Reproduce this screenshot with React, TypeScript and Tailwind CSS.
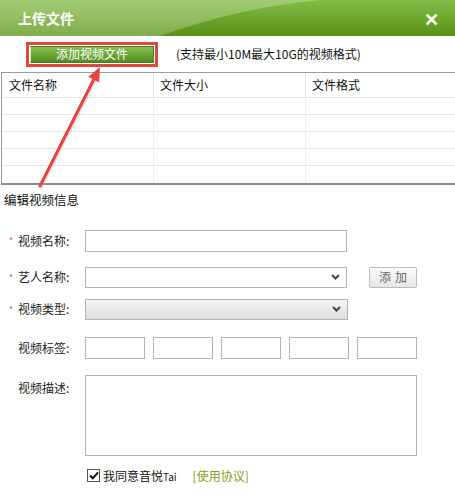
import React from "react";

const font = { fontFamily: '"Noto Sans CJK SC", "Liberation Sans", sans-serif' };

function Chevron() {
  return (
    <svg width="9" height="7" viewBox="0 0 9 7" className="absolute right-[6px] top-1/2 -translate-y-1/2">
      <path d="M1 1.5 L4.5 5 L8 1.5" stroke="#444" strokeWidth="2" fill="none" />
    </svg>
  );
}

function Label({ text, required }: { text: string; required?: boolean }) {
  return (
    <div className="w-[85px] shrink-0 flex items-center pl-[9px] text-[12px] text-[#222]">
      <span className={`w-[9px] text-[9px] leading-none ${required ? "text-[#e0603c]" : "text-transparent"}`}>*</span>
      <span>{text}</span>
    </div>
  );
}

export default function App() {
  const rows = [0, 1, 2, 3, 4];
  return (
    <div className="relative w-[455px] h-[499px] bg-white overflow-hidden" style={font}>
      {/* Title bar */}
      <div className="relative h-[36px] bg-gradient-to-b from-[#a3cd74] to-[#82ad4c] flex items-center justify-between px-[18px] overflow-hidden">
        <svg className="absolute inset-0" width="455" height="36" viewBox="0 0 455 36">
          <defs>
            <linearGradient id="dark" x1="0" y1="0" x2="0" y2="1">
              <stop offset="0" stopColor="#82bd48" />
              <stop offset="1" stopColor="#5a8f15" />
            </linearGradient>
          </defs>
          <path d="M160 36 C 210 18, 260 6, 320 0 L455 0 L455 36 Z" fill="url(#dark)" />
        </svg>
        <span className="relative text-white font-bold text-[14px]">上传文件</span>
        <span className="relative text-white font-bold text-[18px] leading-none mr-[-2px]">✕</span>
      </div>

      {/* Add file row */}
      <div className="h-[36px] flex items-center">
        <div className="ml-[26px] w-[132px] h-[25px] border-[3px] border-[#e0473f] p-[1px] flex">
          <div className="flex-1 flex items-center justify-center bg-gradient-to-b from-[#88c150] to-[#508c1d] border border-[#4a7d1c] border-l-[#d8eac0] text-white text-[12px]">
            添加视频文件
          </div>
        </div>
        <span className="ml-[18px] text-[12px] text-[#111]">(支持最小10M最大10G的视频格式)</span>
      </div>

      {/* File table */}
      <div className="ml-[1px] border-l border-t border-[#9a9a9a] border-b-2 border-b-[#8a8a8a]">
        <div className="h-[25px] grid grid-cols-[152px_152px_1fr] text-[12px] text-[#111] border-b border-[#e6e6e6]">
          <div className="flex items-center pl-[7px] border-r border-[#e6e6e6]">文件名称</div>
          <div className="flex items-center pl-[6px] border-r border-[#e6e6e6]">文件大小</div>
          <div className="flex items-center pl-[6px]">文件格式</div>
        </div>
        {rows.map((r) => (
          <div key={r} className={`h-[17px] grid grid-cols-[152px_152px_1fr] ${r < 4 ? "border-b border-[#e6e6e6]" : ""}`}>
            <div className="border-r border-[#eeeeee]" />
            <div className="border-r border-[#eeeeee]" />
            <div />
          </div>
        ))}
      </div>

      <div className="pl-[4px] pt-[6px] text-[12.5px] text-[#111]">编辑视频信息</div>

      {/* Form */}
      <div className="mt-[20px] flex flex-col">
        <div className="flex items-center h-[22px]">
          <Label text="视频名称:" required />
          <div className="w-[262px] h-[22px] border border-[#b3b3b3]" />
        </div>

        <div className="flex items-center h-[21px] mt-[15px]">
          <Label text="艺人名称:" required />
          <div className="relative w-[262px] h-[21px] border border-[#b3b3b3]">
            <Chevron />
          </div>
          <div className="ml-[22px] w-[48px] h-[21px] rounded-[2px] border border-[#bdbdbd] bg-gradient-to-b from-[#fbfbfb] to-[#e6e6e6] flex items-center justify-center text-[12px] text-[#666] tracking-[4px] pl-[4px]">
            添加
          </div>
        </div>

        <div className="flex items-center h-[21px] mt-[11px]">
          <Label text="视频类型:" required />
          <div className="relative w-[263px] h-[21px] border border-[#b3b3b3] bg-gradient-to-b from-[#f4f4f4] to-[#dedede]">
            <Chevron />
          </div>
        </div>

        <div className="flex items-center h-[22px] mt-[17px]">
          <Label text="视频标签:" />
          <div className="flex gap-[8px]">
            {[0, 1, 2, 3, 4].map((i) => (
              <div key={i} className="w-[60px] h-[22px] border border-[#b3b3b3]" />
            ))}
          </div>
        </div>

        <div className="flex items-start mt-[16px]">
          <div className="pt-[4px]">
            <Label text="视频描述:" />
          </div>
          <div className="w-[332px] h-[81px] border border-[#b3b3b3]" />
        </div>

        <div className="flex items-center mt-[11px] ml-[87px] text-[12px]">
          <div className="w-[13px] h-[13px] border border-[#555] bg-white flex items-center justify-center">
            <svg width="10" height="9" viewBox="0 0 10 9">
              <path d="M1 4.5 L3.8 7.3 L9 1.3" stroke="#111" strokeWidth="2" fill="none" />
            </svg>
          </div>
          <span className="ml-[3px] text-[#111]">我同意音悦<span className="text-[10px]">Tai</span></span>
          <span className="ml-[16px] text-[#8a9a1e]">[使用协议]</span>
        </div>
      </div>

      {/* Annotation arrow */}
      <svg className="absolute left-0 top-0 pointer-events-none" width="455" height="499" viewBox="0 0 455 499">
        <line x1="40" y1="186" x2="94" y2="79" stroke="#b9b0a8" strokeWidth="4" strokeLinecap="round" opacity="0.35" transform="translate(1 1)" />
        <line x1="40" y1="186" x2="94" y2="79" stroke="#e2463f" strokeWidth="3" strokeLinecap="round" />
        <polygon points="100,67 99.2,82.4 88.2,76.8" fill="#e2463f" />
      </svg>
    </div>
  );
}
